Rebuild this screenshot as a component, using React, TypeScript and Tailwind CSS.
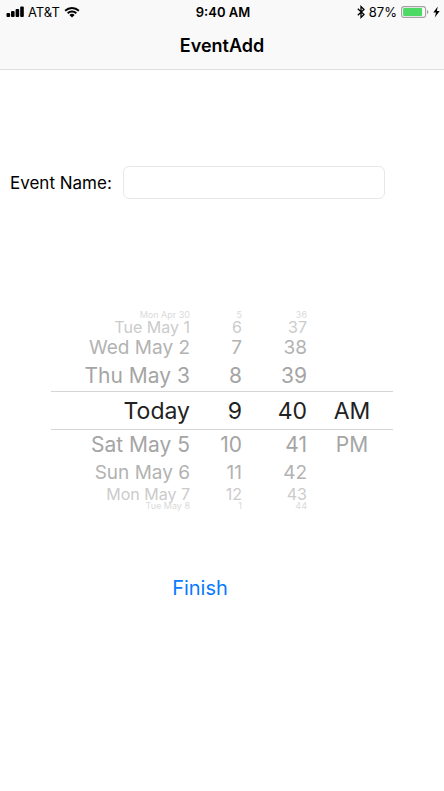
import React from "react";

const SLOTS = [
  "h-2 items-center text-[9px] leading-2 text-[#dadada]",
  "h-4 items-center text-base leading-4 text-[#cbcbcb]",
  "h-[26px] items-center text-[19px] leading-6 text-[#b2b2b2]",
  "h-[30px] items-center text-[21px] leading-7 text-[#a5a5a5]",
  "h-[39px] items-center border-y border-[#d5d5d5] text-[23px] leading-8 text-[#222222]",
  "h-[30px] items-center text-[21px] leading-7 text-[#a5a5a5]",
  "h-[26px] items-center text-[19px] leading-6 text-[#b2b2b2]",
  "h-4 items-center text-base leading-4 text-[#cbcbcb]",
  "h-2 items-center text-[9px] leading-2 text-[#dadada]",
];

type WheelProps = { name: string; align: string; values: string[] };

const WHEELS: WheelProps[] = [
  {
    name: "Date",
    align: "justify-end",
    values: ["Mon Apr 30", "Tue May 1", "Wed May 2", "Thu May 3", "Today", "Sat May 5", "Sun May 6", "Mon May 7", "Tue May 8"],
  },
  { name: "Hour", align: "justify-end", values: ["5", "6", "7", "8", "9", "10", "11", "12", "1"] },
  {
    name: "Minute",
    align: "justify-end",
    values: ["36", "37", "38", "39", "40", "41", "42", "43", "44"],
  },
  { name: "Period", align: "justify-center pl-1", values: ["", "", "", "", "AM", "PM", "", "", ""] },
];

function Wheel({ name, align, values }: WheelProps) {
  return (
    <div role="radiogroup" aria-label={name} className="min-w-0">
      {values.map((value, i) =>
        value ? (
          <label key={i} className={`relative flex whitespace-nowrap ${align} ${SLOTS[i]}`}>
            <input type="radio" name={name} value={value} defaultChecked={i === 4} className="sr-only" />
            <span>{value}</span>
          </label>
        ) : (
          <div key={i} className={SLOTS[i]} />
        ),
      )}
    </div>
  );
}

function StatusBar() {
  return (
    <div className="grid h-6 grid-cols-[1fr_auto_1fr] items-center pr-1 pl-1.5 text-[13px] leading-4">
      <div className="flex items-center gap-1">
        <svg width="18" height="12" viewBox="0 0 18 12" aria-label="Signal">
          <rect x="0.5" y="7" width="3.6" height="4" rx="0.9" />
          <rect x="5" y="5" width="3.6" height="6" rx="0.9" />
          <rect x="9.6" y="3" width="3.6" height="8" rx="0.9" />
          <rect x="14.2" y="0.5" width="3.6" height="10.5" rx="0.9" />
        </svg>
        <span>AT&amp;T</span>
        <svg width="16" height="12" viewBox="0 0 16 12" aria-label="Wi-Fi">
          <path d="M0.5 4.1a10.7 10.7 0 0 1 15 0l-1.3 1.4a8.8 8.8 0 0 0-12.4 0z" />
          <path d="M3 6.6a7.2 7.2 0 0 1 10 0l-1.4 1.4a5.2 5.2 0 0 0-7.2 0z" />
          <path d="M5.4 9a3.8 3.8 0 0 1 5.2 0L8 11.5z" />
        </svg>
      </div>
      <span className="font-semibold">9:40 AM</span>
      <div className="flex items-center justify-end">
        <svg width="8" height="14" viewBox="0 0 8 14" fill="none" stroke="black" strokeWidth="1.3" aria-label="Bluetooth">
          <path d="M0.8 3.8 7 9.6 4 12.4V1.6L7 4.4 0.8 10.2" />
        </svg>
        <span className="ml-1">87%</span>
        <svg width="28" height="12" viewBox="0 0 28 12" className="ml-1" aria-label="Battery">
          <rect x="0.6" y="0.6" width="24" height="10.8" rx="2.4" fill="none" stroke="#a3a3a3" strokeWidth="1.1" />
          <rect x="2.1" y="2" width="19" height="8" rx="1" fill="#4cd964" />
          <path d="M26 4c1.8.3 1.8 3.7 0 4z" fill="#a3a3a3" />
        </svg>
        <svg width="7" height="12" viewBox="0 0 7 12" className="ml-1" aria-label="Charging">
          <path d="M4.8 0.5 0.3 6.5H3L1.8 11.5 6.7 5H3.8z" />
        </svg>
      </div>
    </div>
  );
}

export default function App() {
  return (
    <div className="min-h-screen bg-white font-['Inter','Liberation_Sans',sans-serif] text-black">
      <header className="border-b border-[#dedede] bg-[#f9f9f9]">
        <StatusBar />
        <h1 className="h-[45px] pt-2 text-center text-lg leading-7 font-semibold">EventAdd</h1>
      </header>
      <main>
        <div className="mt-24 flex items-center pr-[59px] pl-2.5">
          <label htmlFor="event-name" className="w-[113px] shrink-0 text-[17px] leading-6 whitespace-nowrap">
            Event Name:
          </label>
          <input
            id="event-name"
            type="text"
            className="h-[33px] min-w-0 flex-1 rounded-md border border-[#e8e8e8] bg-white px-2 text-[17px] outline-none"
          />
        </div>
        <div className="mx-[51px] mt-28 grid grid-cols-[139fr_52fr_65fr_86fr]">
          {WHEELS.map((wheel) => (
            <Wheel key={wheel.name} {...wheel} />
          ))}
        </div>
        <div className="mt-16 flex justify-center pr-11">
          <button type="button" className="text-xl leading-7 text-[#0a7aff]">
            Finish
          </button>
        </div>
      </main>
    </div>
  );
}
